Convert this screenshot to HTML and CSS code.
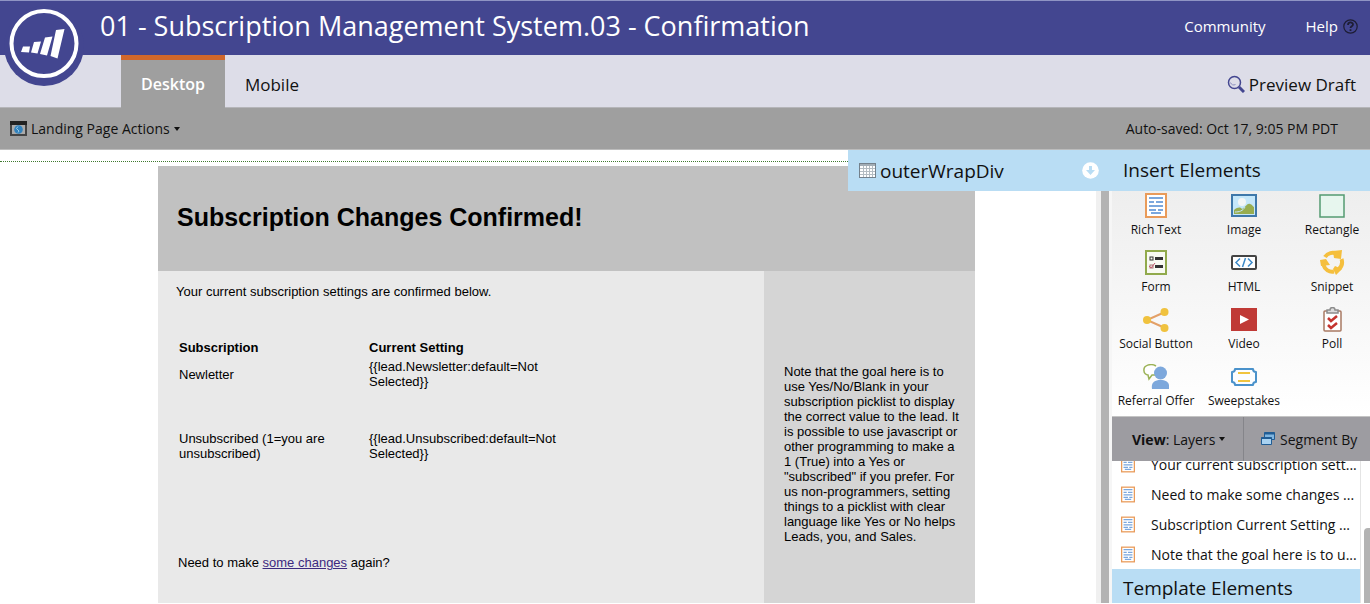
FILE: index.html
```html
<!DOCTYPE html>
<html lang="en">
<head>
  <meta charset="UTF-8">
  <meta name="viewport" content="width=device-width, initial-scale=1.0">
  <title>01 - Subscription Management System.03 - Confirmation</title>
  <link rel="stylesheet" href="styles.css">
</head>
<body>
  <!-- shared icon for rich text elements -->
  <svg class="defs" width="0" height="0" aria-hidden="true">
    <symbol id="rich-text" viewBox="0 0 22 25">
      <rect x="1" y="1" width="20" height="23" fill="#fff" stroke="#e99b5a" stroke-width="2"/>
      <path d="M4 5h14M4 9h5M11 9h7M4 13h14M4 17h7M13 17h5M6 20h10" stroke="#7ba7dd" stroke-width="2" fill="none"/>
    </symbol>
  </svg>

  <header class="topbar">
    <a href="#" class="logo" aria-label="Home">
      <svg width="80" height="82" viewBox="0 0 80 82">
        <circle cx="40" cy="41" r="40" fill="#434690"/>
        <circle cx="40" cy="38.500" r="32.500" fill="none" stroke="#fff" stroke-width="4"/>
        <path d="M19 41.500h7l-1 6-8-.5zM30 37l7-.5-3.500 12-6.500-1zM41 32.500l7.500-1-5.500 19-7-1.500zM52 25l8.500-1-7 29.500-7-2.500z" fill="#fff"/>
      </svg>
    </a>
    <h1 class="title">01 - Subscription Management System.03 - Confirmation</h1>
    <nav class="top-links">
      <a href="#">Community</a>
      <a href="#" class="help">Help
        <svg width="15" height="15" viewBox="0 0 15 15" fill="none" stroke="#1d1d33">
          <circle cx="7.5" cy="7.5" r="6.7" stroke-width="1.2"/>
          <path d="M5 6c0-3.300 5-3.300 5-.4 0 1.700-2.500 1.600-2.500 3.400M7.500 10.300v1.700" stroke-width="1.800"/>
        </svg>
      </a>
    </nav>
  </header>

  <div class="tabs">
    <button type="button" class="tab active">Desktop</button>
    <button type="button" class="tab">Mobile</button>
    <button type="button" class="preview">
      <svg width="18" height="18" viewBox="0 0 18 18" fill="none" stroke="#434690">
        <circle cx="7.500" cy="7.500" r="6" stroke-width="1.500"/>
        <path d="M3.500 7.500c.8 2.500 3 3 5 2" stroke="#8d8fc0"/>
        <path d="M12 12l5 5" stroke-width="3"/>
      </svg>
      Preview Draft
    </button>
  </div>

  <div class="toolbar">
    <button type="button" class="actions">
      <svg width="17" height="15" viewBox="0 0 17 15">
        <rect x="1" y="1" width="15" height="13" fill="#aaa" stroke="#444" stroke-width="2"/>
        <path d="M0 0h17v4H0z" fill="#222"/>
        <circle cx="8.500" cy="8.500" r="4.300" fill="#3282bd"/>
        <path d="M8 5.500L6.500 7.500 9 10l-1 1.500" stroke="#9ccbe8" fill="none"/>
      </svg>
      Landing Page Actions
      <span class="caret"></span>
    </button>
    <span class="saved">Auto-saved: Oct 17, 9:05 PM PDT</span>
  </div>

  <main class="workspace">
    <section class="stage">
      <div class="canvas">
        <div class="fold-line"></div>
        <article class="page">
          <div class="page-head">
            <h2>Subscription Changes Confirmed!</h2>
          </div>
          <div class="page-body">
            <div class="page-main">
              <p class="intro">Your current subscription settings are confirmed below.</p>
              <table class="settings">
                <thead>
                  <tr><th>Subscription</th><th>Current Setting</th></tr>
                </thead>
                <tbody>
                  <tr><td>Newletter</td><td>{{lead.Newsletter:default=Not Selected}}</td></tr>
                  <tr><td>Unsubscribed (1=you are unsubscribed)</td><td>{{lead.Unsubscribed:default=Not Selected}}</td></tr>
                </tbody>
              </table>
              <p class="again">Need to make <a href="#">some changes</a> again?</p>
            </div>
            <aside class="page-note">
              <p>Note that the goal here is to use Yes/No/Blank in your subscription picklist to display the correct value to the lead. It is possible to use javascript or other programming to make a 1 (True) into a Yes or "subscribed" if you prefer. For us non-programmers, setting things to a picklist with clear language like Yes or No helps Leads, you, and Sales.</p>
            </aside>
          </div>
        </article>
      </div>
      <div class="splitter"></div>

      <div class="selected-layer">
        <svg width="17" height="15" viewBox="0 0 17 15">
          <rect x=".5" y=".5" width="16" height="14" fill="#fff" stroke="#74818c"/>
          <path d="M1 2h15" stroke="#a3adb5" stroke-width="2"/>
          <path d="M4.500 3v11M7.500 3v11M10.500 3v11M13.500 3v11M1 5.500h15M1 8.500h15M1 11.500h15" stroke="#b4bcc2"/>
        </svg>
        <span>outerWrapDiv</span>
        <button type="button" class="collapse" aria-label="Collapse">
          <svg width="17" height="17" viewBox="0 0 17 17">
            <circle cx="8.500" cy="8.500" r="8.300" fill="#fff"/>
            <path d="M7 4h3v4h3l-4.500 5L4 8h3z" fill="#b9ddf4"/>
          </svg>
        </button>
      </div>
    </section>

    <aside class="sidebar">
      <h3 class="panel-title">Insert Elements</h3>
      <div class="elements">
        <button type="button" class="element">
          <svg width="26" height="25"><use href="#rich-text" x="2" width="22" height="25"/></svg>
          Rich Text
        </button>
        <button type="button" class="element">
          <svg width="26" height="25" viewBox="0 0 26 25">
            <rect x="1" y="2" width="24" height="21" fill="#c5e7fa" stroke="#3f78aa" stroke-width="2"/>
            <circle cx="11" cy="9" r="4" fill="#f3f5f5"/>
            <path d="M3 17c4-3 6-3 8-1 4-2 5-6 8-5 2 0 3 3 4 3v7H3z" fill="#98ad50"/>
            <path d="M4 19c4 0 8-1 10-5" fill="none" stroke="#c5e7fa"/>
          </svg>
          Image
        </button>
        <button type="button" class="element">
          <svg width="26" height="25" viewBox="0 0 26 25">
            <rect x="1" y="2" width="24" height="22" fill="#e7f6ee" stroke="#549b72" stroke-width="1.500"/>
          </svg>
          Rectangle
        </button>
        <button type="button" class="element">
          <svg width="26" height="25" viewBox="0 0 26 25">
            <rect x="3" y="1" width="20" height="23" fill="#f8faf2" stroke="#91aa4c" stroke-width="2"/>
            <rect x="7" y="7" width="3" height="3" fill="none" stroke="#333"/>
            <rect x="7" y="15" width="3" height="3" fill="none" stroke="#a77"/>
            <path d="M6 16l2 2 4-5" fill="none" stroke="#c65a72"/>
            <path d="M12 8.500h8M12 16.500h8" stroke="#333" stroke-width="3"/>
          </svg>
          Form
        </button>
        <button type="button" class="element">
          <svg width="26" height="25" viewBox="0 0 26 25">
            <rect x="1" y="6" width="24" height="13" rx="1" fill="#fff" stroke="#444" stroke-width="2"/>
            <path d="M9 8.500l-4 4 4 4M17 8.500l4 4-4 4M14.500 8l-3 9" fill="none" stroke="#3c8ac8" stroke-width="1.500"/>
          </svg>
          HTML
        </button>
        <button type="button" class="element">
          <svg width="26" height="25" viewBox="0 0 26 25">
            <g fill="none" stroke="#f5bf3d" stroke-width="4">
              <path d="M6 7A9 9 0 0 1 18 4"/>
              <path d="M22.500 9A9.500 9.500 0 0 1 20 19"/>
              <path d="M15 21.500A9 9 0 0 1 4.500 15"/>
            </g>
            <path d="M14 1l9-1-1 9-7-1zM16 16l7 3-6 6-3-6zM1 10l6-1 4 6-9 1z" fill="#f5bf3d"/>
          </svg>
          Snippet
        </button>
        <button type="button" class="element">
          <svg width="26" height="25" viewBox="0 0 26 25">
            <path d="M22 5L4 13l18 8" fill="none" stroke="#e3a068" stroke-width="2"/>
            <g fill="#f0c23e"><circle cx="4" cy="13" r="4"/><circle cx="21.500" cy="5" r="4"/><circle cx="21.500" cy="21" r="4"/></g>
          </svg>
          Social Button
        </button>
        <button type="button" class="element">
          <svg width="26" height="25" viewBox="0 0 26 25">
            <path d="M0 1h26v23H0z" fill="#c03a36"/>
            <path d="M9 8l9 4.500L9 17z" fill="#fff"/>
          </svg>
          Video
        </button>
        <button type="button" class="element">
          <svg width="26" height="25" viewBox="0 0 26 25">
            <rect x="5" y="4" width="17" height="20" rx="1" fill="#fff" stroke="#a87963" stroke-width="1.500"/>
            <path d="M8 6V3h3a2.500 2.500 0 0 1 5 0h3v3z" fill="#ddd" stroke="#8c8c8c" stroke-width="1.500"/>
            <path d="M9 11l3 3 6-5M9 18l3 3 6-5" fill="none" stroke="#c4342f" stroke-width="2.500"/>
          </svg>
          Poll
        </button>
        <button type="button" class="element">
          <svg width="26" height="25" viewBox="0 0 26 25">
            <path d="M13 2C8-1 0 1 1 7c0 2 2 4 4 4l1 4 3-4h3" fill="#fff" stroke="#9bb256" stroke-width="1.500"/>
            <circle cx="17.500" cy="9" r="6.500" fill="#7da8dc"/>
            <path d="M9 25c-1-6 2-9 8.500-9s9.500 3 8.500 9z" fill="#7da8dc"/>
          </svg>
          Referral Offer
        </button>
        <button type="button" class="element">
          <svg width="26" height="25" viewBox="0 0 26 25">
            <path d="M4 5h18q0 3 3 3v10q-3 0-3 3H4q0-3-3-3V8q3 0 3-3z" fill="#fbfdff" stroke="#4a92cb" stroke-width="2" stroke-linejoin="round"/>
            <path d="M7 9h12M7 17h12" stroke="#f0c43f" stroke-width="2"/>
          </svg>
          Sweepstakes
        </button>
      </div>

      <div class="viewbar">
        <button type="button" class="view"><span><b>View</b>: Layers</span><span class="caret"></span></button>
        <button type="button" class="segment">
          <svg width="14" height="14" viewBox="0 0 14 14">
            <path d="M3.500.5h10v7h-10z" fill="#7fb5e0" stroke="#205c94"/>
            <path d="M3.500 1.500h10" stroke="#205c94" stroke-width="2"/>
            <path d="M.5 5.500h10v7H.5z" fill="#a9d2f1" stroke="#205c94"/>
            <path d="M.5 6h10" stroke="#205c94" stroke-width="2"/>
          </svg>
          Segment By
        </button>
      </div>

      <div class="layers">
        <div class="layers-main">
          <ul class="layer-list">
            <li><svg width="14" height="17"><use href="#rich-text"/></svg><span>Your current subscription sett...</span></li>
            <li><svg width="14" height="17"><use href="#rich-text"/></svg><span>Need to make some changes ...</span></li>
            <li><svg width="14" height="17"><use href="#rich-text"/></svg><span>Subscription Current Setting ...</span></li>
            <li><svg width="14" height="17"><use href="#rich-text"/></svg><span>Note that the goal here is to u...</span></li>
          </ul>
          <h3 class="panel-title template">Template Elements</h3>
        </div>
        <div class="track"><div class="thumb"></div></div>
      </div>
    </aside>
  </main>
</body>
</html>
```
FILE: styles.css
```css
:root {
  --purple: #434690;
  --lavender: #dddde8;
  --grey: #9f9f9f;
  --blue: #b9ddf4;
  --ui: "Open Sans", "Noto Sans", sans-serif;
  --page: "Liberation Sans", Arial, sans-serif;
}

* {
  box-sizing: border-box;
}

body {
  margin: 0;
  min-height: 100vh;
  display: flex;
  flex-direction: column;
  background: #fff;
  color: #111;
  font-family: var(--ui);
  font-size: 14px;
}

h1, h2, h3, p, ul {
  margin: 0;
  padding: 0;
  font-weight: normal;
}

button {
  border: none;
  padding: 0;
  background: none;
  color: inherit;
  font: inherit;
  cursor: pointer;
}

svg {
  flex-shrink: 0;
}

.defs {
  position: absolute;
}

/* Header */
.topbar {
  position: relative;
  display: flex;
  align-items: center;
  height: 55px;
  padding: 0 12px 4px 100px;
  background: var(--purple);
  border-top: 1px solid #8f94c4;
  color: #fff;
}

.logo {
  position: absolute;
  left: 4px;
  top: 4px;
  height: 82px;
}

.title {
  flex: 1;
  font-size: 27px;
  line-height: 36px;
  white-space: nowrap;
}

.top-links {
  display: flex;
  gap: 40px;
  font-size: 15px;
}

.top-links a {
  color: #fff;
  text-decoration: none;
}

.help {
  display: flex;
  align-items: center;
  gap: 5px;
}

/* Tabs */
.tabs {
  display: flex;
  height: 53px;
  padding: 0 14px 0 121px;
  background: var(--lavender);
  border-bottom: 1px solid #b5b5b9;
  font-size: 17px;
}

.tab {
  padding: 5px 20px 0;
  margin-bottom: -1px;
}

.tab.active {
  background: var(--grey);
  border-top: 5px solid #d1672b;
  padding-top: 0;
  color: #fff;
  font-size: 16px;
  font-weight: 600;
}

.preview {
  display: flex;
  align-items: center;
  gap: 4px;
  margin-left: auto;
  padding-top: 6px;
}

/* Toolbar */
.toolbar {
  display: flex;
  align-items: center;
  justify-content: space-between;
  height: 42px;
  padding: 0 32px 0 10px;
  background: var(--grey);
  border-bottom: 1px solid #bcbcbc;
}

.actions {
  display: flex;
  align-items: center;
  gap: 4px;
}

.caret {
  border: 3px solid transparent;
  border-top: 4px solid #111;
  border-bottom: 0;
}

/* Workspace */
.workspace {
  flex: 1;
  display: flex;
  padding-bottom: 1px;
}

.stage {
  position: relative;
  flex: 1;
  display: flex;
}

.canvas {
  flex: 1;
  display: flex;
  flex-direction: column;
  padding-top: 11px;
}

.fold-line {
  border-top: 1px dotted #3f7a2f;
  margin-bottom: 4px;
}

.splitter {
  width: 16px;
  background: #b3b3b3;
  border-left: 5px solid #f0f0f0;
  border-right: 3px solid #f6f6f6;
}

.selected-layer {
  position: absolute;
  top: 0;
  right: 0;
  width: 264px;
  height: 41px;
  display: flex;
  align-items: center;
  gap: 4px;
  padding: 0 13px 0 11px;
  background: var(--blue);
  font-size: 19px;
}

.collapse {
  display: flex;
  margin-left: auto;
}

/* Edited landing page */
.page {
  flex: 1;
  display: flex;
  flex-direction: column;
  margin: 0 121px 0 158px;
  color: #000;
  font-family: var(--page);
  font-size: 13px;
  line-height: 15px;
}

.page-head {
  height: 105px;
  padding: 36px 19px;
  background: #c1c1c1;
}

.page-head h2 {
  font-size: 25px;
  line-height: 30px;
  font-weight: bold;
}

.page-body {
  flex: 1;
  display: flex;
}

.page-main {
  flex: 1;
  padding: 13px 18px;
  background: #e9e9e9;
}

.settings {
  width: 400px;
  margin: 38px 0 0;
  table-layout: fixed;
  border-collapse: collapse;
}

.settings th,
.settings td {
  padding: 2px 3px;
  text-align: left;
}

.settings th {
  padding-top: 3px;
}

.settings tbody tr:last-child td {
  padding-top: 40px;
}

.settings th:first-child {
  width: 190px;
}

.again {
  margin: 92px 2px 0;
}

.again a {
  color: #3d2a80;
}

.page-note {
  width: 211px;
  padding: 93px 12px 20px 20px;
  background: #d5d5d5;
}

/* Sidebar */
.sidebar {
  width: 258px;
  display: flex;
  flex-direction: column;
}

.panel-title {
  padding-left: 11px;
  background: var(--blue);
  font-size: 19px;
  line-height: 41px;
}

.elements {
  display: grid;
  grid-template-columns: repeat(3, 88px);
  grid-auto-rows: 52px;
  row-gap: 5px;
  padding-top: 2px;
  overflow: hidden;
  background: linear-gradient(#eee, #fff);
}

.element {
  display: flex;
  flex-direction: column;
  align-items: center;
  gap: 4px;
  font-size: 12px;
  line-height: 16px;
}

.viewbar {
  display: flex;
  height: 45px;
  background: #9d9ca1;
  border-top: 1px solid #c4c4c4;
}

.view,
.segment {
  display: flex;
  align-items: center;
}

.view {
  width: 132px;
  gap: 4px;
  padding-left: 20px;
  border-right: 1px solid #85858a;
}

.segment {
  gap: 5px;
  padding-left: 17px;
}

.layers {
  flex: 1;
  display: flex;
}

.layers-main {
  flex: 1;
}

.layer-list {
  display: flex;
  flex-direction: column;
  justify-content: flex-end;
  height: 108px;
  overflow: hidden;
  list-style: none;
}

.layer-list li {
  display: flex;
  flex-shrink: 0;
  align-items: center;
  gap: 16px;
  height: 30px;
  padding-left: 9px;
  white-space: nowrap;
}

.panel-title.template {
  height: 34px;
  line-height: 38px;
}

.track {
  width: 10px;
  display: flex;
  flex-direction: column;
  padding-left: 3px;
  border-left: 1px solid #e4e4e4;
}

.thumb {
  height: 75px;
  margin-top: auto;
  background: #b3b3b3;
  border-radius: 4px 0 0 0;
}
```
